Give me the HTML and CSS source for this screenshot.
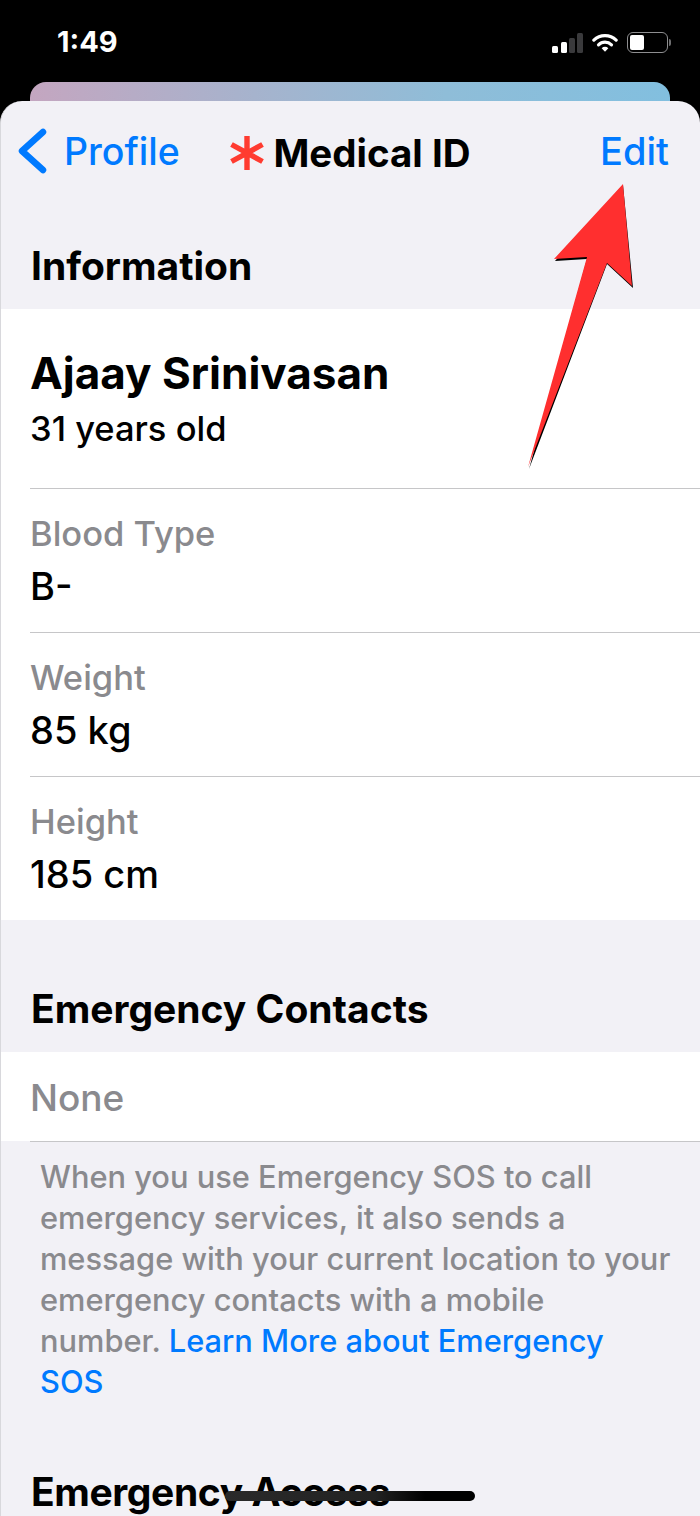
FILE: index.html
```html
<!DOCTYPE html>
<html lang="en">
<head>
    <meta charset="UTF-8">
    <meta name="viewport" content="width=device-width, initial-scale=1.0">
    <title>Medical ID</title>
    <link rel="stylesheet" href="styles.css">
</head>
<body>

    <div class="phone">
        <div class="status-bar">
            <span class="time">1:49</span>
            <div class="status-icons">
                <svg class="signal" width="31" height="20" viewBox="0 0 31 20">
                    <rect x="0" y="13" width="6" height="7" rx="1.5" fill="#fff"/>
                    <rect x="9" y="9" width="6" height="11" rx="1.5" fill="#fff"/>
                    <rect x="17" y="5" width="6" height="15" rx="1.5" fill="#3a3a3c"/>
                    <rect x="25" y="0" width="6" height="20" rx="1.5" fill="#3a3a3c"/>
                </svg>
                <svg class="wifi" width="26" height="19" viewBox="0 0 28 20">
                    <path d="M2 7.5a17 17 0 0 1 24 0" fill="none" stroke="#fff" stroke-width="3.4" stroke-linecap="round"/>
                    <path d="M7 12.5a10 10 0 0 1 14 0" fill="none" stroke="#fff" stroke-width="3.4" stroke-linecap="round"/>
                    <path d="M10.4 16.2a5 5 0 0 1 7.2 0L14 20z" fill="#fff"/>
                </svg>
                <div class="battery">
                    <div class="battery-body"><div class="battery-level"></div></div>
                    <div class="battery-cap"></div>
                </div>
            </div>
        </div>

        <div class="back-card"></div>

        <div class="sheet">
            <div class="nav">
                <div class="nav-back">
                    <svg width="30" height="46" viewBox="0 0 30 46">
                        <path d="M26 4 5 23l21 19" fill="none" stroke="#007aff" stroke-width="6.5" stroke-linecap="round" stroke-linejoin="round"/>
                    </svg>
                    <span>Profile</span>
                </div>
                <div class="nav-title">
                    <svg width="34" height="34" viewBox="0 0 34 34">
                        <path d="M17 0v34M1.500 8.500l31 17M32.500 8.500l-31 17" fill="none" stroke="#ff3b30" stroke-width="5.4"/>
                    </svg>
                    <span>Medical ID</span>
                </div>
                <span class="nav-edit">Edit</span>
            </div>

            <h2 class="section-title info-title">Information</h2>
            <div class="group">
                <div class="row name-row">
                    <div class="name">Ajaay Srinivasan</div>
                    <div class="age">31 years old</div>
                </div>
                <div class="row">
                    <div class="label">Blood Type</div>
                    <div class="value">B-</div>
                </div>
                <div class="row">
                    <div class="label">Weight</div>
                    <div class="value">85 kg</div>
                </div>
                <div class="row">
                    <div class="label">Height</div>
                    <div class="value">185 cm</div>
                </div>
            </div>

            <h2 class="section-title contacts-title">Emergency Contacts</h2>
            <div class="group none-group">
                <div class="none">None</div>
            </div>
            <div class="rule"></div>
            <p class="footnote">When you use Emergency SOS to call emergency services, it also sends a message with your current location to your emergency contacts with a mobile<br>number. <span class="link">Learn More about Emergency<br>SOS</span></p>

            <h2 class="section-title access-title">Emergency Access</h2>
        </div>

        <svg class="arrow" width="700" height="500" viewBox="0 0 700 500">
            <polygon class="arrow-shadow" points="623,185 633,288 607,264 529,469 587,259 555,261"/>
            <polygon class="arrow-head" points="623,184 632,286 607,263 528,467 587,257 554,259"/>
        </svg>
        <div class="home-bar"></div>
    </div>

</body>
</html>
```

FILE: styles.css
```css
* {
    box-sizing: border-box;
}

html, body {
    margin: 0;
    background-color: #000;
}

body {
    font-family: Inter, "Liberation Sans", sans-serif;
    color: #000;
}

.phone {
    position: relative;
    width: 700px;
    height: 1516px;
    overflow: hidden;
    background-color: #000;
}

/* status bar */
.status-bar {
    height: 82px;
    display: flex;
    justify-content: space-between;
    align-items: flex-start;
    padding: 26px 29px 0 57px;
}

.time {
    color: #fff;
    font-size: 29px;
    font-weight: 700;
    line-height: 32px;
}

.status-icons {
    display: flex;
    align-items: center;
    gap: 9px;
    padding-top: 6px;
}

.battery {
    display: flex;
    align-items: center;
    gap: 1px;
}

.battery-body {
    width: 41px;
    height: 21px;
    border: 1.5px solid #8e8e90;
    border-radius: 6px;
    padding: 2px;
}

.battery-level {
    width: 14px;
    height: 100%;
    background-color: #fff;
    border-radius: 2px;
}

.battery-cap {
    width: 2px;
    height: 7px;
    background-color: #6e6e70;
    border-radius: 0 2px 2px 0;
}

.back-card {
    height: 19px;
    margin: 0 30px;
    border-radius: 16px 16px 0 0;
    background: linear-gradient(90deg, #c4a6c0 0%, #a6b3cd 35%, #8fbdd8 65%, #82bfdf 100%);
}

/* sheet */
.sheet {
    height: 1415px;
    border-left: 1px solid #d8d8dc;
    background-color: #f2f1f6;
    border-radius: 22px 22px 0 0;
}

.nav {
    height: 100px;
    display: grid;
    grid-template-columns: 1fr auto 1fr;
    align-items: center;
    padding: 0 31px;
}

.nav-back {
    display: flex;
    align-items: center;
    gap: 17px;
    margin-left: -15px;
    color: #007aff;
    font-size: 37.5px;
    font-weight: 500;
}

.nav-back svg {
    display: block;
}

.nav-title {
    display: flex;
    align-items: center;
    gap: 9px;
    margin-top: 3px;
    font-size: 38.5px;
    font-weight: 700;
}

.nav-edit {
    justify-self: end;
    color: #007aff;
    font-size: 38px;
    font-weight: 500;
}

.section-title {
    margin: 0;
    padding-left: 30px;
    font-size: 39px;
    font-weight: 700;
    line-height: 44px;
}

.info-title {
    padding-top: 43px;
    height: 108px;
}

.group {
    background-color: #fff;
}

.row {
    height: 144px;
    margin-left: 29px;
    padding-top: 24px;
    border-top: 1px solid #c6c6c8;
}

.name-row {
    height: 179px;
    padding-top: 40px;
    border-top: none;
}

.name {
    font-size: 44px;
    font-weight: 700;
    line-height: 48px;
}

.age {
    font-size: 34.5px;
    font-weight: 500;
    line-height: 40px;
    margin-top: 12px;
}

.label {
    color: #8a8a8e;
    font-size: 34.5px;
    font-weight: 500;
    line-height: 42px;
}

.value {
    font-size: 38px;
    font-weight: 500;
    line-height: 42px;
    margin-top: 10px;
}

.contacts-title {
    padding-top: 67px;
    height: 132px;
}

.none-group {
    height: 89px;
    padding-left: 29px;
}

.none {
    color: #8a8a8e;
    font-size: 37px;
    font-weight: 500;
    line-height: 91px;
}

.rule {
    height: 1px;
    margin-left: 29px;
    background-color: #c6c6c8;
}

.footnote {
    margin: 0;
    padding: 14px 20px 0 39px;
    color: #8a8a8e;
    font-size: 30.8px;
    font-weight: 500;
    line-height: 41px;
}

.link {
    color: #007aff;
}

.access-title {
    padding-top: 68px;
    letter-spacing: -0.4px;
}

/* overlays */
.arrow {
    position: absolute;
    left: 0;
    top: 0;
}

.arrow-shadow {
    fill: #000;
}

.arrow-head {
    fill: #ff2f2f;
}

.home-bar {
    position: absolute;
    left: 225px;
    top: 1491px;
    width: 250px;
    height: 10px;
    border-radius: 5px;
    background: linear-gradient(90deg, #2a2a2a 0%, #222 60%, #000 80%);
}
```
